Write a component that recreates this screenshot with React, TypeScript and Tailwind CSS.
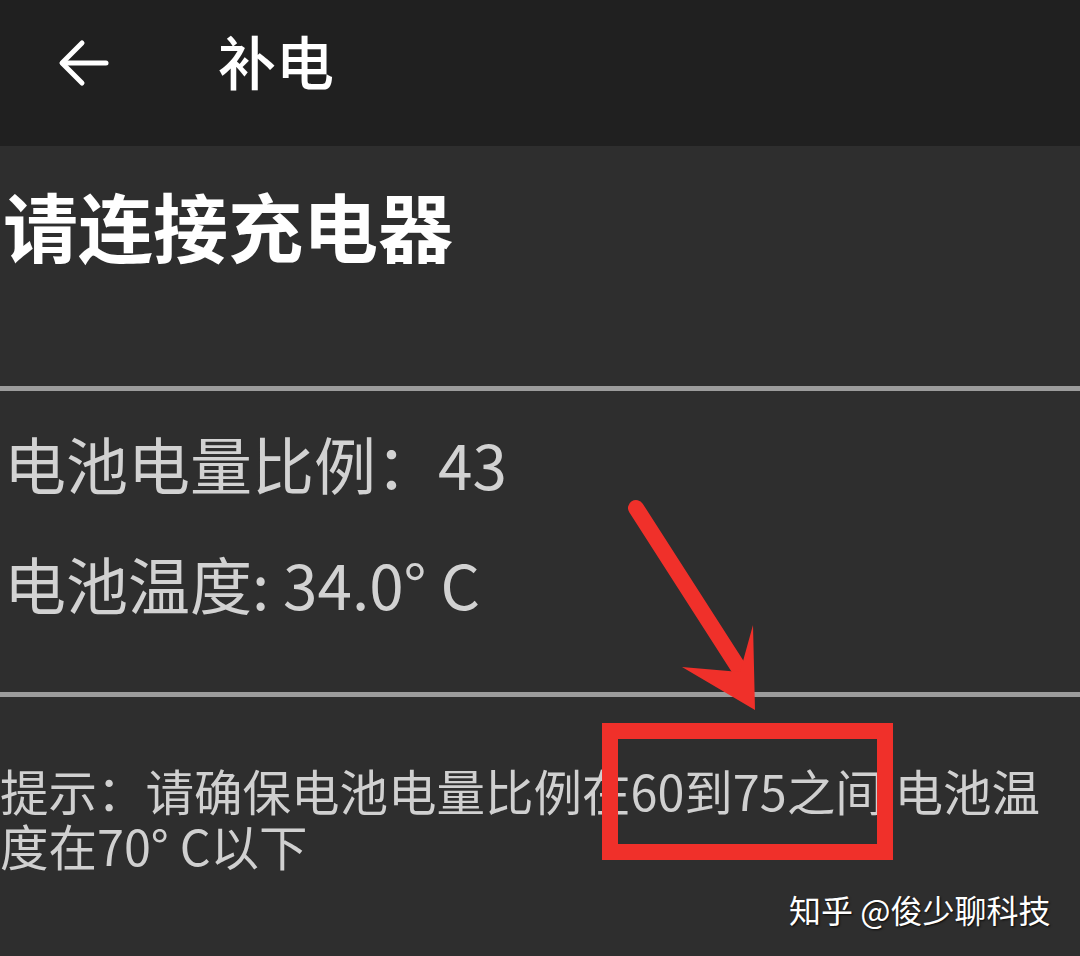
const cjk = "font-['Noto_Sans_CJK_SC','Noto_Sans',sans-serif]";

export default function App() {
  return (
    <div className={`relative w-[1080px] h-[956px] overflow-hidden bg-[#2e2e2e] ${cjk}`}>
      {/* Top bar */}
      <header className="h-[146px] bg-[#202020] flex items-center pb-[20px]">
        <svg className="ml-[58px] w-[52px] h-[48px]" viewBox="0 0 52 48" fill="none" stroke="#ffffff" strokeWidth="5" strokeLinecap="round" strokeLinejoin="round">
          <path d="M48 24H5" />
          <path d="M24 4L4 24l20 20" />
        </svg>
        <h1 className="ml-[108px] -mt-[6px] text-[58px] font-medium text-white leading-none">补电</h1>
      </header>

      {/* Status */}
      <section className="h-[240px] pt-[41px]">
        <h2 className="pl-[3px] text-[75px] font-bold text-white leading-[75px]">请连接充电器</h2>
      </section>

      <div className="h-[5px] bg-[#9c9c9c]" />

      {/* Battery info */}
      <section className="h-[301px] flex flex-col pt-[41px] gap-[58px] pl-[4px] text-[62px] leading-[62px] text-[#d2d2d2]">
        <p>电池电量比例：43</p>
        <p>电池温度: 34.0° C</p>
      </section>

      <div className="h-[5px] bg-[#9c9c9c]" />

      {/* Hint */}
      <p className="w-[1060px] pt-[66px] text-[48.5px] leading-[55px] text-[#d0d0d0]">
        提示：请确保电池电量比例在60到75之间 电池温度在70° C以下
      </p>

      {/* Annotation overlay */}
      <svg className="absolute left-[620px] top-[495px] w-[150px] h-[225px]" viewBox="0 0 150 225">
        <path d="M16 13L118 172" stroke="#f0302a" strokeWidth="16" strokeLinecap="round" />
        <polygon points="135,215 62,172 120,177 133,130" fill="#f0302a" />
      </svg>
      <div className="absolute left-[602px] top-[723px] w-[291px] h-[137px] border-[16px] border-[#f0302a]" />

      {/* Watermark */}
      <div className="absolute left-[789px] top-[889px] text-[32px] leading-[40px] text-white [text-shadow:1px_1px_2px_rgba(0,0,0,0.8)]">
        知乎 @俊少聊科技
      </div>
    </div>
  );
}
